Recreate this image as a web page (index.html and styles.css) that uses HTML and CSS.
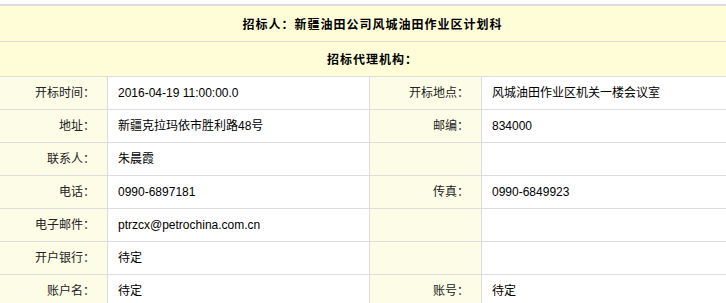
FILE: index.html
```html
<!DOCTYPE html>
<html lang="zh-CN">
<head>
<meta charset="utf-8">
<title>招标信息</title>
<link rel="stylesheet" href="styles.css">
</head>
<body>
<table class="info">
  <colgroup>
    <col class="c-label">
    <col class="c-value">
    <col class="c-label2">
    <col class="c-value2">
  </colgroup>
  <tr class="head first"><th colspan="4">招标人：新疆油田公司风城油田作业区计划科</th></tr>
  <tr class="head second"><th colspan="4">招标代理机构：</th></tr>
  <tr>
    <td class="label">开标时间：</td><td class="value">2016-04-19 11:00:00.0</td>
    <td class="label">开标地点：</td><td class="value">风城油田作业区机关一楼会议室</td>
  </tr>
  <tr>
    <td class="label">地址：</td><td class="value">新疆克拉玛依市胜利路48号</td>
    <td class="label">邮编：</td><td class="value">834000</td>
  </tr>
  <tr>
    <td class="label">联系人：</td><td class="value">朱晨霞</td>
    <td class="label"></td><td class="value"></td>
  </tr>
  <tr>
    <td class="label">电话：</td><td class="value">0990-6897181</td>
    <td class="label">传真：</td><td class="value">0990-6849923</td>
  </tr>
  <tr>
    <td class="label">电子邮件：</td><td class="value">ptrzcx@petrochina.com.cn</td>
    <td class="label"></td><td class="value"></td>
  </tr>
  <tr>
    <td class="label">开户银行：</td><td class="value">待定</td>
    <td class="label"></td><td class="value"></td>
  </tr>
  <tr>
    <td class="label">账户名：</td><td class="value">待定</td>
    <td class="label">账号：</td><td class="value">待定</td>
  </tr>
</table>
</body>
</html>
```
FILE: styles.css
```css
html, body {
  margin: 0;
  padding: 0;
  background: #ffffff;
  overflow: hidden;
}
body {
  font-family: "Liberation Sans", "Noto Sans CJK SC", sans-serif;
  font-size: 12px;
  color: #000;
}
.info {
  border-collapse: collapse;
  table-layout: fixed;
  width: 752px;
  margin: 4px 0 0 -4px;
  border-top: 2px solid #dddddd;
}
.c-label { width: 111px; }
.c-value { width: 262px; }
.c-label2 { width: 112px; }
.c-value2 { width: 267px; }
.info th, .info td {
  border: 1px solid #dddddd;
  padding: 0;
  line-height: 14px;
}
.info .head th {
  background: #fffdd8;
  font-weight: bold;
  letter-spacing: 1px;
  text-align: center;
  padding-top: 3px;
  box-sizing: border-box;
  color: #000;
}
.info .head.first th { border-top: none; height: 36px; }
.info .head.second th { height: 35px; }
.info td {
  height: 32px;
  vertical-align: middle;
}
.info td.label {
  background: #fdfde7;
  text-align: right;
  padding-right: 12px;
  color: #222;
}
.info td.value {
  background: #ffffff;
  text-align: left;
  padding-left: 10px;
}
```
